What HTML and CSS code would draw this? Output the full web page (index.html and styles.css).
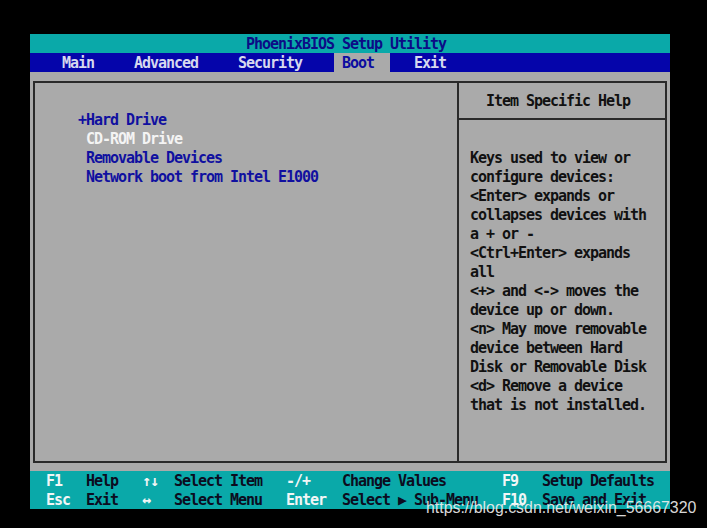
FILE: index.html
```html
<!DOCTYPE html>
<html lang="en">
<head>
<meta charset="utf-8">
<title>PhoenixBIOS Setup Utility</title>
<link rel="stylesheet" href="styles.css">
</head>
<body>
<div class="screen">
  <div class="title">PhoenixBIOS Setup Utility</div>
  <nav class="menu">
    <span class="item">Main</span>
    <span class="item">Advanced</span>
    <span class="item">Security</span>
    <span class="item active">Boot</span>
    <span class="item">Exit</span>
  </nav>
  <div class="main">
    <div class="box">
      <div class="pane-left">
        <div class="dev"><span class="mark">+</span>Hard Drive</div>
        <div class="dev current">CD-ROM Drive</div>
        <div class="dev">Removable Devices</div>
        <div class="dev">Network boot from Intel E1000</div>
      </div>
      <div class="pane-right">
        <div class="help-head">Item Specific Help</div>
        <div class="help-body">
          <div>Keys used to view or</div>
          <div>configure devices:</div>
          <div>&lt;Enter&gt; expands or</div>
          <div>collapses devices with</div>
          <div>a + or -</div>
          <div>&lt;Ctrl+Enter&gt; expands</div>
          <div>all</div>
          <div>&lt;+&gt; and &lt;-&gt; moves the</div>
          <div>device up or down.</div>
          <div>&lt;n&gt; May move removable</div>
          <div>device between Hard</div>
          <div>Disk or Removable Disk</div>
          <div>&lt;d&gt; Remove a device</div>
          <div>that is not installed.</div>
        </div>
      </div>
    </div>
  </div>
  <footer class="keys">
    <span class="k">F1</span><span class="d">Help</span><span class="k">↑↓</span><span class="d">Select Item</span><span class="k">-/+</span><span class="d">Change Values</span><span class="k">F9</span><span class="d">Setup Defaults</span>
    <span class="k">Esc</span><span class="d">Exit</span><span class="k">↔</span><span class="d">Select Menu</span><span class="k">Enter</span><span class="d">Select ▶ Sub-Menu</span><span class="k">F10</span><span class="d">Save and Exit</span>
  </footer>
</div>
<div class="watermark">https://blog.csdn.net/weixin_56667320</div>
</body>
</html>
```
FILE: styles.css
```css
html, body {
  margin: 0;
  padding: 0;
  background: #000;
}
body {
  width: 707px;
  height: 528px;
  position: relative;
  overflow: hidden;
  padding-top: 34px;
  box-sizing: border-box;
}
.screen {
  margin-left: 30px;
  width: 640px;
  font-family: "DejaVu Sans Mono", monospace;
  font-size: 15px;
  font-weight: bold;
  letter-spacing: -1.03px;
  line-height: 19px;
  white-space: nowrap;
}
.title {
  height: 19px;
  box-sizing: border-box;
  padding: 1px 0 0 216px;
  background: #0aa9a9;
  color: #0c0c86;
}
.menu {
  height: 19px;
  background: #0505aa;
  display: flex;
  gap: 24px;
  padding-left: 24px;
}
.menu .item {
  height: 19px;
  box-sizing: border-box;
  padding: 1px 8px 0 8px;
  color: #d6d8ee;
}
.menu .item.active {
  background: #aaaaaa;
  color: #0c0ca0;
  padding-right: 16px;
  margin-right: -8px;
}
.main {
  height: 399px;
  background: #aaaaaa;
  padding: 9px 3px 8px 3px;
  box-sizing: border-box;
}
.box {
  height: 100%;
  box-sizing: border-box;
  border: 2px solid #2a2a2a;
  display: flex;
}
.pane-left {
  width: 371px;
  border-right: 2px solid #2a2a2a;
  padding: 28px 0 0 51px;
}
.dev {
  color: #1010a0;
}
.dev.current {
  color: #f4f4f4;
}
.mark {
  margin-left: -8px;
}
.pane-right {
  flex: 1;
  color: #111;
}
.help-head {
  height: 26px;
  padding: 9px 0 0 27px;
  border-bottom: 2px solid #2a2a2a;
}
.help-body {
  padding: 29px 0 0 11px;
}
.keys {
  height: 38px;
  box-sizing: border-box;
  padding: 1px 0 0 16px;
  background: #0aa9a9;
  display: grid;
  grid-template-columns: 40px 56px 32px 112px 56px 160px 40px auto;
  grid-auto-rows: 19px;
}
.keys .k {
  color: #f2f6f6;
}
.keys .d {
  color: #0c0c20;
}
.watermark {
  position: absolute;
  left: 426px;
  top: 498px;
  font-family: "Liberation Sans", Arial, sans-serif;
  font-size: 15.9px;
  line-height: 20px;
  color: rgba(238, 238, 238, 0.92);
  white-space: nowrap;
}
```
